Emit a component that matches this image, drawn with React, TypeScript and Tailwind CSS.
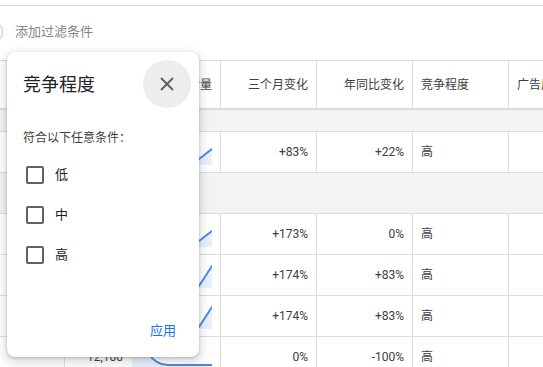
import React from "react";

type Row = { kw: string; vol: string; spark: string; m3: string; yoy: string; comp: string };

const rows: Row[] = [
  { kw: "", vol: "1,000", spark: "M0,14 L12,16 L24,18 L36,20 L48,22 L60,21 L67,20 L80,10", m3: "+173%", yoy: "0%", comp: "高" },
  { kw: "", vol: "1,000", spark: "M0,18 L12,20 L24,22 L36,24 L48,25 L60,25 L67,24 L80,4", m3: "+174%", yoy: "+83%", comp: "高" },
  { kw: "", vol: "1,000", spark: "M0,18 L12,20 L24,22 L36,24 L48,25 L60,25 L67,24 L80,4", m3: "+174%", yoy: "+83%", comp: "高" },
  { kw: "", vol: "12,100", spark: "M0,1 C8,2 12,5 16,9 C20,15 26,21 36,21 L80,21", m3: "0%", yoy: "-100%", comp: "高" },
];

function Spark({ d }: { d: string }) {
  return (
    <svg width="80" height="26" viewBox="0 0 80 26" className="shrink-0">
      <path d={`${d} L80,26 L0,26 Z`} fill="#e8f0fe" />
      <path d={d} fill="none" stroke="#4a86f0" strokeWidth="2" strokeLinejoin="round" strokeLinecap="round" />
    </svg>
  );
}

function DataRow({ r }: { r: Row }) {
  return (
    <div className="flex h-[41px] border-b border-[#dadce0] text-[12px] text-[#3c4043]">
      <div className="w-[65px] shrink-0 border-r border-[#dadce0] px-2 flex items-center">{r.kw}</div>
      <div className="w-[156px] shrink-0 border-r border-[#dadce0] pr-2 flex items-center justify-end gap-[9px]">
        <span>{r.vol}</span>
        <Spark d={r.spark} />
      </div>
      <div className="w-[96px] shrink-0 border-r border-[#dadce0] px-2 flex items-center justify-end">{r.m3}</div>
      <div className="w-[96px] shrink-0 border-r border-[#dadce0] px-2 flex items-center justify-end">{r.yoy}</div>
      <div className="w-[96px] shrink-0 border-r border-[#dadce0] px-2 flex items-center">{r.comp}</div>
      <div className="flex-1" />
    </div>
  );
}

function Checkbox({ label }: { label: string }) {
  return (
    <label className="flex h-[40px] items-center gap-[11px] pl-[19px]">
      <span className="h-[18px] w-[18px] rounded-[2px] border-2 border-[#5f6368]" />
      <span className="text-[13px] text-[#202124]">{label}</span>
    </label>
  );
}

export default function App() {
  return (
    <div className="relative h-[367px] w-[543px] overflow-hidden bg-white font-['Roboto','Noto_Sans_CJK_SC',sans-serif]">
      <div className="h-[5px]" />
      {/* filter bar */}
      <div className="flex h-[55px] items-center gap-3 border-t border-[#dadce0] pb-[2px]">
        <span className="ml-[-21px] h-[24px] w-[24px] shrink-0 rounded-full border border-[#bdc1c6]" />
        <span className="text-[13px] text-[#80868b]">添加过滤条件</span>
      </div>

      {/* table */}
      <div className="border-t border-[#dadce0]">
        <div className="flex h-[49px] border-b-2 border-[#dadce0] text-[12px] text-[#3c4043] shadow-[0_1px_2px_rgba(60,64,67,0.12)]">
          <div className="w-[65px] shrink-0 border-r border-[#dadce0]" />
          <div className="w-[156px] shrink-0 border-r border-[#dadce0] px-2 flex items-center justify-end">平均每月搜索量</div>
          <div className="w-[96px] shrink-0 border-r border-[#dadce0] px-2 flex items-center justify-end">三个月变化</div>
          <div className="w-[96px] shrink-0 border-r border-[#dadce0] px-2 flex items-center justify-end">年同比变化</div>
          <div className="w-[96px] shrink-0 border-r border-[#dadce0] px-2 flex items-center">竞争程度</div>
          <div className="flex-1 min-w-0 px-2 flex items-center whitespace-nowrap overflow-hidden">广告展示次数份额</div>
        </div>
        <div className="h-[22px] border-b border-[#dadce0] bg-[#f1f3f4]" />
        <DataRow r={{ kw: "", vol: "1,000", spark: "M0,12 L12,14 L24,16 L36,18 L48,20 L60,21 L67,20 L80,10", m3: "+83%", yoy: "+22%", comp: "高" }} />
        <div className="h-[41px] border-b border-[#dadce0] bg-[#f1f3f4]" />
        {rows.map((r, i) => (
          <DataRow key={i} r={r} />
        ))}
      </div>

      {/* popup */}
      <div className="absolute left-[7px] top-[52px] flex h-[305px] w-[192px] flex-col rounded-lg bg-white shadow-[0_1px_3px_rgba(60,64,67,0.3),0_4px_8px_3px_rgba(60,64,67,0.15)]">
        <div className="flex h-[56px] items-center justify-between pl-4 pr-2 pt-2">
          <span className="text-[18px] text-[#202124]">竞争程度</span>
          <button className="flex h-12 w-12 items-center justify-center rounded-full bg-[#eceded]">
            <svg width="16" height="16" viewBox="0 0 16 16">
              <path d="M2,2 L14,14 M14,2 L2,14" stroke="#5f6368" strokeWidth="2" />
            </svg>
          </button>
        </div>
        <div className="mt-[21px] pl-4 text-[12px] leading-[18px] text-[#3c4043]">符合以下任意条件：</div>
        <div className="mt-[8px] flex flex-col">
          <Checkbox label="低" />
          <Checkbox label="中" />
          <Checkbox label="高" />
        </div>
        <div className="mt-auto flex justify-end pb-4 pr-[23px]">
          <span className="text-[13px] leading-[20px] text-[#1a73e8]">应用</span>
        </div>
      </div>
    </div>
  );
}
